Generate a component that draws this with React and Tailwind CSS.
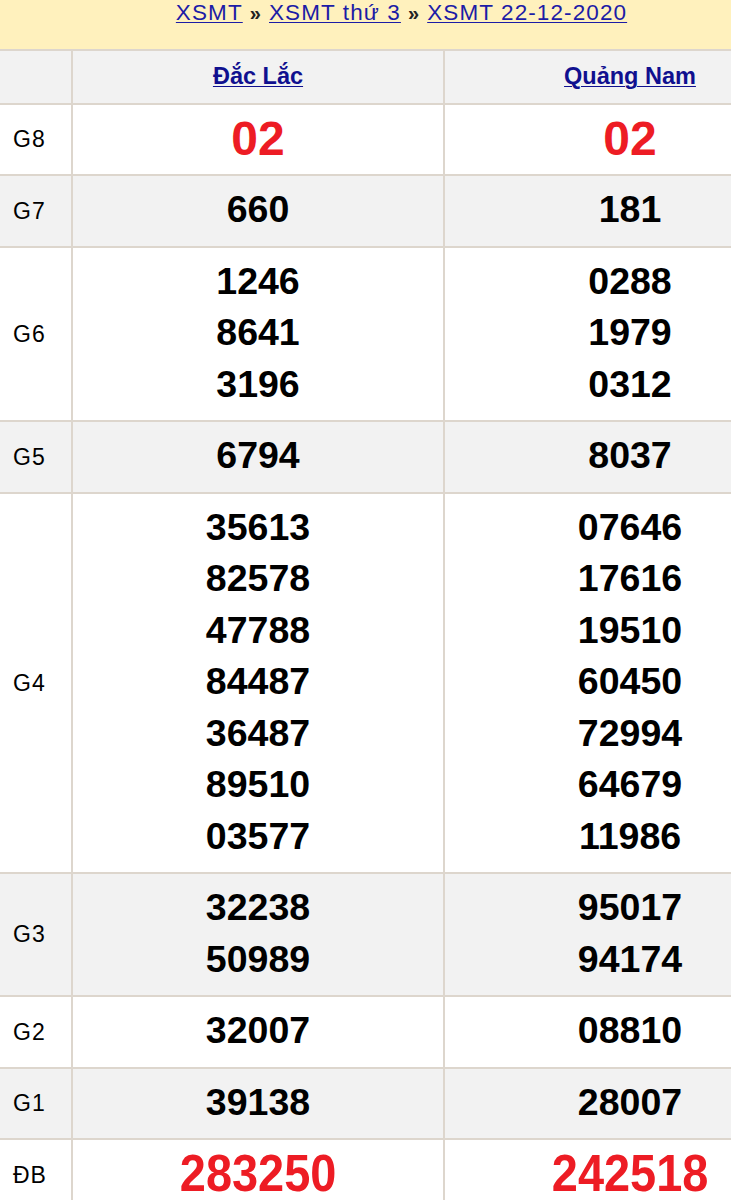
import React from "react";

const rows = [
  { label: "G8", a: ["02"], b: ["02"], kind: "g8" },
  { label: "G7", a: ["660"], b: ["181"] },
  { label: "G6", a: ["1246", "8641", "3196"], b: ["0288", "1979", "0312"] },
  { label: "G5", a: ["6794"], b: ["8037"] },
  {
    label: "G4",
    a: ["35613", "82578", "47788", "84487", "36487", "89510", "03577"],
    b: ["07646", "17616", "19510", "60450", "72994", "64679", "11986"],
  },
  { label: "G3", a: ["32238", "50989"], b: ["95017", "94174"] },
  { label: "G2", a: ["32007"], b: ["08810"] },
  { label: "G1", a: ["39138"], b: ["28007"] },
  { label: "ĐB", a: ["283250"], b: ["242518"], kind: "db" },
];

function Nums({ list, kind, bg }) {
  return (
    <div className={`${bg} flex flex-col items-center pt-[8px] pb-[10px]`}>
      {list.map((n, i) => {
        if (kind === "g8")
          return (
            <div key={i} className="leading-[51.5px] text-[48px] font-bold text-[#ed1c24]">
              {n}
            </div>
          );
        if (kind === "db")
          return (
            <div key={i} className="leading-[51.5px] text-[51px] font-bold text-[#ed1c24] scale-x-[0.92]">
              {n}
            </div>
          );
        return (
          <div key={i} className="leading-[51.5px] text-[37.5px] font-bold text-black">
            {n}
          </div>
        );
      })}
    </div>
  );
}

export default function App() {
  return (
    <div
      className="w-[731px] overflow-x-hidden bg-white"
      style={{ fontFamily: '"Liberation Sans", Arial, Helvetica, sans-serif' }}
    >
      <div className="w-[815px]">
        <div className="h-[49px] bg-[#fff1bd] flex justify-center pr-[12px]">
          <div className="text-[22.5px] leading-[26px] tracking-[1.1px] text-[#1c1ca6] flex items-start gap-[7px]">
            <span className="underline decoration-1 underline-offset-2">XSMT</span>
            <span className="font-bold text-[#222] text-[20px]">»</span>
            <span className="underline decoration-1 underline-offset-2">XSMT thứ 3</span>
            <span className="font-bold text-[#222] text-[20px]">»</span>
            <span className="underline decoration-1 underline-offset-2">XSMT 22-12-2020</span>
          </div>
        </div>
        <div className="grid grid-cols-[71px_370px_370px] gap-[2px] pt-[2px] bg-[#ddd6cd]">
          <div className="bg-[#f2f2f2] h-[51.5px]" />
          <div className="bg-[#f2f2f2] h-[51.5px] flex items-center justify-center">
            <span className="text-[23.5px] font-bold text-[#10108f] underline decoration-1 underline-offset-2">
              Đắc Lắc
            </span>
          </div>
          <div className="bg-[#f2f2f2] h-[51.5px] flex items-center justify-center">
            <span className="text-[23.5px] font-bold text-[#10108f] underline decoration-1 underline-offset-2">
              Quảng Nam
            </span>
          </div>
          {rows.map((r, i) => {
            const bg = i % 2 === 0 ? "bg-white" : "bg-[#f2f2f2]";
            return (
              <React.Fragment key={r.label}>
                <div className={`${bg} flex items-center pl-[13px] text-[23px] tracking-[1px] text-black`}>
                  {r.label}
                </div>
                <Nums list={r.a} kind={r.kind} bg={bg} />
                <Nums list={r.b} kind={r.kind} bg={bg} />
              </React.Fragment>
            );
          })}
        </div>
      </div>
    </div>
  );
}
